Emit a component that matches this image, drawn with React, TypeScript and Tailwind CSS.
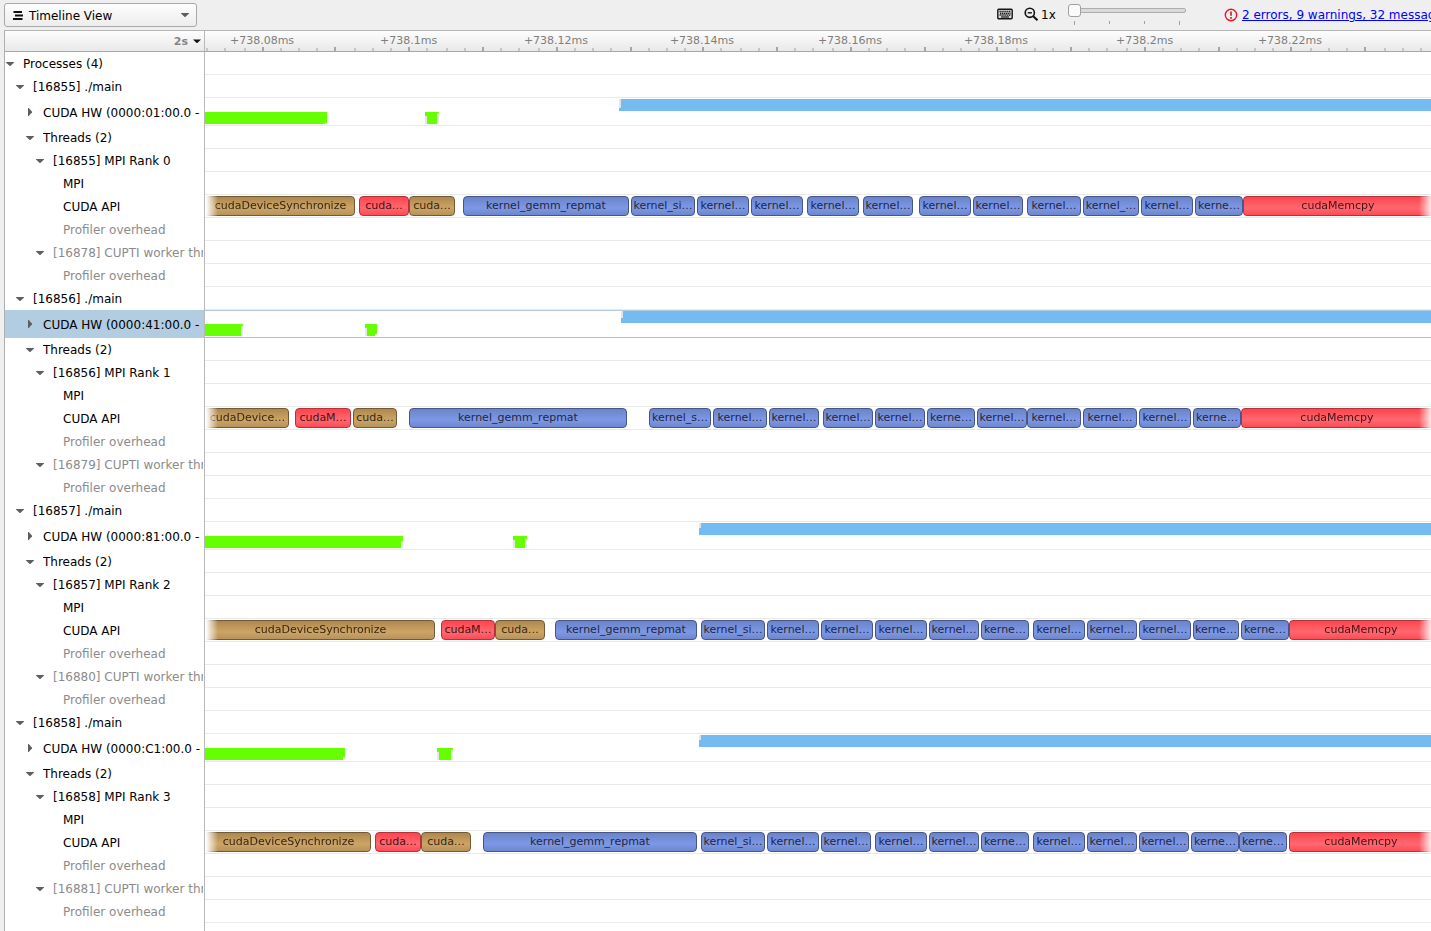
import React from "react";

type Kind = "sync" | "memcpy" | "kernel";
type Block = [start: number, end: number, label: string, kind: Kind];
type Notch = { x: number; y: number; w: number; h: number; c: string };

interface Process {
  pid: string;
  rank: number;
  worker: string;
  bus: string;
  selected?: boolean;
  green: { busyEnd: number; busyNotch: number; start: number; end: number; tailNotch: number; tailSide: "grey" | "white" };
  blueStart: number;
  blueNotch: number;
  blocks: Block[];
}

const ORIGIN = 205;
const RIGHT = 1431;

const short = (k: string, n: number) => `${k.slice(0, n)}…`;
const SYNC = "cudaDeviceSynchronize";
const GEMM = "kernel_gemm_repmat";
const K = "kernel_sigmoid";

const processes: Process[] = [
  {
    pid: "16855",
    rank: 0,
    worker: "16878",
    bus: "01",
    green: { busyEnd: 327, busyNotch: 11, start: 425, end: 439, tailNotch: 1, tailSide: "grey" },
    blueStart: 619,
    blueNotch: 9,
    blocks: [
      [205, 355, SYNC, "sync"],
      [359, 409, "cuda…", "memcpy"],
      [409, 455, "cuda…", "sync"],
      [463, 629, GEMM, "kernel"],
      [631, 695, short(K, 9), "kernel"],
      [697, 749, short(K, 6), "kernel"],
      [751, 803, short(K, 6), "kernel"],
      [807, 859, short(K, 6), "kernel"],
      [863, 913, short(K, 6), "kernel"],
      [919, 971, short(K, 6), "kernel"],
      [973, 1023, short(K, 6), "kernel"],
      [1027, 1081, short(K, 6), "kernel"],
      [1083, 1139, short(K, 7), "kernel"],
      [1141, 1193, short(K, 6), "kernel"],
      [1195, 1243, short(K, 5), "kernel"],
      [1243, 1431, "cudaMemcpy", "memcpy"],
    ],
  },
  {
    pid: "16856",
    rank: 1,
    worker: "16879",
    bus: "41",
    selected: true,
    green: { busyEnd: 243, busyNotch: 2, start: 365, end: 377, tailNotch: 10, tailSide: "white" },
    blueStart: 621,
    blueNotch: 7,
    blocks: [
      [205, 289, "cudaDevice…", "sync"],
      [295, 351, "cudaM…", "memcpy"],
      [353, 397, "cuda…", "sync"],
      [409, 627, GEMM, "kernel"],
      [649, 711, short(K, 8), "kernel"],
      [713, 767, short(K, 6), "kernel"],
      [769, 819, short(K, 6), "kernel"],
      [823, 873, short(K, 6), "kernel"],
      [875, 925, short(K, 6), "kernel"],
      [927, 975, short(K, 5), "kernel"],
      [977, 1027, short(K, 6), "kernel"],
      [1027, 1081, short(K, 6), "kernel"],
      [1083, 1137, short(K, 6), "kernel"],
      [1139, 1191, short(K, 6), "kernel"],
      [1193, 1241, short(K, 5), "kernel"],
      [1241, 1431, "cudaMemcpy", "memcpy"],
    ],
  },
  {
    pid: "16857",
    rank: 2,
    worker: "16880",
    bus: "81",
    green: { busyEnd: 403, busyNotch: 5, start: 513, end: 527, tailNotch: 3, tailSide: "grey" },
    blueStart: 699,
    blueNotch: 5,
    blocks: [
      [205, 435, SYNC, "sync"],
      [441, 495, "cudaM…", "memcpy"],
      [495, 545, "cuda…", "sync"],
      [555, 697, GEMM, "kernel"],
      [701, 765, short(K, 9), "kernel"],
      [767, 819, short(K, 6), "kernel"],
      [821, 873, short(K, 6), "kernel"],
      [875, 927, short(K, 6), "kernel"],
      [929, 979, short(K, 6), "kernel"],
      [981, 1029, short(K, 5), "kernel"],
      [1033, 1085, short(K, 6), "kernel"],
      [1087, 1137, short(K, 6), "kernel"],
      [1139, 1191, short(K, 6), "kernel"],
      [1193, 1239, short(K, 5), "kernel"],
      [1241, 1289, short(K, 5), "kernel"],
      [1289, 1431, "cudaMemcpy", "memcpy"],
    ],
  },
  {
    pid: "16858",
    rank: 3,
    worker: "16881",
    bus: "C1",
    green: { busyEnd: 345, busyNotch: 9, start: 437, end: 453, tailNotch: 2, tailSide: "grey" },
    blueStart: 699,
    blueNotch: 5,
    blocks: [
      [205, 371, SYNC, "sync"],
      [375, 421, "cuda…", "memcpy"],
      [421, 471, "cuda…", "sync"],
      [483, 697, GEMM, "kernel"],
      [701, 765, short(K, 9), "kernel"],
      [767, 819, short(K, 6), "kernel"],
      [821, 871, short(K, 6), "kernel"],
      [875, 927, short(K, 6), "kernel"],
      [929, 979, short(K, 6), "kernel"],
      [981, 1029, short(K, 5), "kernel"],
      [1033, 1085, short(K, 6), "kernel"],
      [1087, 1137, short(K, 6), "kernel"],
      [1139, 1189, short(K, 6), "kernel"],
      [1191, 1239, short(K, 5), "kernel"],
      [1239, 1287, short(K, 5), "kernel"],
      [1289, 1431, "cudaMemcpy", "memcpy"],
    ],
  },
];

const majorTicks = [262, 334, 408, 482, 556, 630, 702, 776, 850, 924, 996, 1070, 1144, 1218, 1290, 1364];
const minorTicks = [
  206, 224, 244, 280, 298, 316, 354, 372, 390, 426, 446, 464, 500, 518, 538, 574, 592, 610, 648, 666, 684, 720, 740,
  758, 794, 812, 832, 868, 886, 904, 942, 960, 978, 1016, 1034, 1052, 1088, 1106, 1126, 1162, 1180, 1198, 1236, 1254,
  1272, 1310, 1328, 1346, 1384, 1402, 1420,
];
const timeLabels: [number, string][] = [
  [262, "+738.08ms"],
  [408.6, "+738.1ms"],
  [556, "+738.12ms"],
  [702, "+738.14ms"],
  [850, "+738.16ms"],
  [996, "+738.18ms"],
  [1144.6, "+738.2ms"],
  [1290, "+738.22ms"],
];

const blockStyles: Record<Kind, string> = {
  sync: "border-[#725a35] bg-linear-to-b from-[#ad884f] via-[#cda464] via-60% to-[#b8935a] text-[#352817]",
  memcpy: "border-[#b5323b] bg-linear-to-b from-[#ff434d] via-[#ff6870] via-60% to-[#ff4a54] text-[#421416]",
  kernel: "border-[#46558a] bg-linear-to-b from-[#6b83c6] via-[#7d98e8] via-60% to-[#6d86cd] text-[#1f2740]",
};

function Arrow({ open }: { open: boolean }) {
  return (
    <svg width="10" height="10" viewBox="0 0 10 10" className="shrink-0">
      {open ? <path d="M1 3h8v.6L5.300 7h-.6L1 3.600z" fill="#5e5e5e" /> : <path d="M3 1h.8L7 4.700v.6L3.800 9H3z" fill="#5e5e5e" />}
    </svg>
  );
}

const indents = ["pl-0", "pl-[10px]", "pl-[20px]", "pl-[30px]", "pl-[40px]"];

interface RowProps {
  depth: number;
  label: string;
  arrow?: "open" | "closed";
  muted?: boolean;
  tall?: boolean;
  selected?: boolean;
  children?: React.ReactNode;
}

function Row({ depth, label, arrow, muted, tall, selected, children }: RowProps) {
  return (
    <div className={`flex shrink-0 ${tall ? "h-[28px]" : "h-[23px]"}`}>
      <div
        className={`flex w-[200px] shrink-0 items-center overflow-hidden border-r border-[#b8b8b8] pr-px ${indents[depth]} ${
          selected ? "bg-[#b2cce1]" : "bg-white"
        }`}
      >
        <div className="flex w-[18px] shrink-0 items-center">{arrow && <Arrow open={arrow === "open"} />}</div>
        <span
          className={`text-[12px] leading-[22px] whitespace-nowrap ${tall ? "pt-[2px]" : "overflow-hidden"} ${
            muted ? "text-[#8b8b8b]" : "text-black"
          }`}
        >
          {label}
        </span>
      </div>
      <div
        className={`flex min-w-0 flex-1 overflow-hidden border-b ${
          selected ? "border-t border-t-[#b2cce1] border-b-[#aabfd2]" : "border-[#e9e9e9]"
        }`}
      >
        {children}
      </div>
    </div>
  );
}

function HardwareBars({ p }: { p: Process }) {
  const g = p.green;
  const top = p.selected ? -1 : 0;
  const notches: Notch[] = [
    { x: g.busyEnd - 2, y: 14 + g.busyNotch, w: 2, h: 12 - g.busyNotch, c: g.busyNotch > 8 ? "#f4f4f4" : "#e6e6e6" },
    { x: g.start, y: 18, w: 2, h: 8, c: "#e6e6e6" },
    { x: g.end - 2, y: 14 + g.tailNotch, w: 2, h: 12 - g.tailNotch, c: g.tailSide === "grey" ? "#e6e6e6" : "#f4f4f4" },
    { x: p.blueStart, y: 1, w: 2, h: p.blueNotch, c: "#e4e4e4" },
  ];
  return (
    <svg width={RIGHT - ORIGIN} height="27" viewBox={`${ORIGIN} ${-top} ${RIGHT - ORIGIN} 27`} className="shrink-0" shapeRendering="crispEdges">
      <rect x={ORIGIN} y="14" width={g.busyEnd - ORIGIN} height="12" fill="#66ff00" />
      <rect x={g.start} y="14" width={g.end - g.start} height="12" fill="#66ff00" />
      <rect x={p.blueStart} y="1" width={RIGHT - p.blueStart} height="12" fill="#74bbf2" />
      {notches.map((n, i) => (
        <rect key={i} x={n.x} y={n.y} width={n.w} height={n.h} fill={n.c} />
      ))}
    </svg>
  );
}

function ApiBlocks({ blocks }: { blocks: Block[] }) {
  return (
    <div className="flex pt-px">
      {blocks.map(([start, end, label, kind], i) => {
        const first = i === 0;
        const last = i === blocks.length - 1;
        const gap = first ? 0 : start - blocks[i - 1][1];
        const edge = first
          ? "rounded-r-[4px] border-l-0 pl-[2px] mask-[linear-gradient(to_right,transparent_1px,black_13px)]"
          : last
            ? "rounded-l-[4px] border-r-0 pl-px mask-[linear-gradient(to_left,transparent_-2px,black_12px)]"
            : "rounded-[4px]";
        return (
          <div
            key={start}
            className={`flex h-[20px] shrink-0 items-center justify-center overflow-hidden border text-[11px] leading-[18px] whitespace-nowrap ${edge} ${blockStyles[kind]}`}
            style={{ width: end - start, marginLeft: gap }}
          >
            {label}
          </div>
        );
      })}
    </div>
  );
}

function ProcessRows({ p }: { p: Process }) {
  return (
    <>
      <Row depth={1} arrow="open" label={`[${p.pid}] ./main`} />
      <Row depth={2} arrow="closed" label={`CUDA HW (0000:${p.bus}:00.0 -`} tall selected={p.selected}>
        <HardwareBars p={p} />
      </Row>
      <Row depth={2} arrow="open" label="Threads (2)" />
      <Row depth={3} arrow="open" label={`[${p.pid}] MPI Rank ${p.rank}`} />
      <Row depth={4} label="MPI" />
      <Row depth={4} label="CUDA API">
        <ApiBlocks blocks={p.blocks} />
      </Row>
      <Row depth={4} label="Profiler overhead" muted />
      <Row depth={3} arrow="open" label={`[${p.worker}] CUPTI worker thread`} muted />
      <Row depth={4} label="Profiler overhead" muted />
    </>
  );
}

function Toolbar() {
  return (
    <div className="flex h-[30px] shrink-0 items-start">
      <button className="mt-[3px] ml-1 flex h-[24px] w-[193px] shrink-0 items-center rounded-[3px] border border-[#a9a9a9] bg-linear-to-b from-[#fdfdfd] to-[#ededed] pr-[6px] pl-[8px]">
        <svg width="11" height="11" viewBox="0 0 11 11" className="shrink-0">
          <path d="M.5 2h8.500M2 5.500h8M0 9h9.500" stroke="#111" strokeWidth="2.200" />
        </svg>
        <span className="ml-[5px] flex-1 pt-px text-left text-[12px] leading-[20px]">Timeline View</span>
        <Arrow open />
      </button>
      <svg width="16" height="12" viewBox="0 0 16 12" className="mt-[8px] ml-[800px] shrink-0">
        <rect x=".8" y="1.300" width="14.400" height="9.400" rx="1" fill="#ddd" stroke="#151515" strokeWidth="1.400" />
        <path d="M2.500 3.500h11M3 5.500h10.500M2.500 7.200h11" stroke="#151515" strokeWidth="1.300" strokeDasharray="1.300 .6" />
        <path d="M4 9h8" stroke="#151515" strokeWidth="1.200" />
      </svg>
      <svg width="15" height="15" viewBox="0 0 15 15" fill="none" stroke="#111" className="mt-[7px] ml-[11px] shrink-0">
        <circle cx="5.800" cy="5.800" r="4.600" strokeWidth="1.600" />
        <path d="M9.200 9.200L13.500 13.200" strokeWidth="2.100" />
        <path d="M3.700 5.800h4.200" strokeWidth="1.400" />
      </svg>
      <span className="mt-[5px] ml-[2px] w-[16px] shrink-0 text-[12px] leading-[20px]">1x</span>
      <svg width="122" height="24" viewBox="0 0 122 24" className="mt-[3px] ml-[10px] shrink-0">
        <rect x="3.500" y="5.500" width="115" height="4" rx="1.500" fill="#dadada" stroke="#adadad" />
        <path d="M7.500 18v4M42.500 18v3M77.500 18v3M112.500 18v4" stroke="#a0a0a0" />
        <rect x="1.500" y="1.500" width="12" height="12" rx="2.500" fill="#fafafa" stroke="#a0a0a0" />
      </svg>
      <svg width="14" height="14" viewBox="0 0 14 14" fill="none" stroke="#e01b24" className="mt-[8px] ml-[35px] shrink-0">
        <circle cx="7" cy="7" r="5.700" strokeWidth="1.400" />
        <path d="M7 3.500v4.300M7 9v1.700" strokeWidth="1.700" />
      </svg>
      <a className="mt-[5px] ml-[4px] shrink-0 text-[12px] leading-[20px] whitespace-nowrap text-[#0000ff] underline">2 errors, 9 warnings, 32 messages</a>
    </div>
  );
}

function Ruler() {
  return (
    <div className="flex h-[22px] shrink-0 border-y border-t-[#b5b5b5] border-b-[#a8a8a8] bg-linear-to-b from-[#fdfdfd] to-[#e9e9e9]">
      <div className="flex w-[200px] shrink-0 items-center justify-end border-r border-[#b8b8b8] pr-[2px] text-[11px] font-bold text-[#858585]">
        <span className="pt-[3px]">2s</span>
        <svg width="10" height="10" viewBox="0 0 10 10" className="ml-[4px]">
          <path d="M1 3.500h8L5.300 7h-.6z" fill="#111" />
        </svg>
      </div>
      <div className="flex min-w-0 flex-1 flex-col overflow-hidden">
        <div className="flex h-[16px] shrink-0 text-[11px] leading-[20px] text-[#7e7e7e]">
          {timeLabels.map(([x, label], i) => (
            <span
              key={label}
              className="w-[80px] shrink-0 text-center"
              style={{ marginLeft: i === 0 ? x - 40 - ORIGIN : x - timeLabels[i - 1][0] - 80 }}
            >
              {label}
            </span>
          ))}
        </div>
        <svg width={RIGHT - ORIGIN} height="4" viewBox={`${ORIGIN} 0 ${RIGHT - ORIGIN} 4`} className="shrink-0" shapeRendering="crispEdges">
          {majorTicks.map((x) => (
            <rect key={x} x={x} y="0" width="2" height="4" fill="#a6a6a6" />
          ))}
          {minorTicks.map((x) => (
            <rect key={x} x={x} y="1" width="2" height="3" fill="#c6c6c6" />
          ))}
        </svg>
      </div>
    </div>
  );
}

export default function App() {
  return (
    <div className="flex h-[931px] w-[1431px] flex-col overflow-hidden bg-[#efefef] font-['DejaVu_Sans',sans-serif] text-black">
      <Toolbar />
      <div className="ml-1 flex min-h-0 flex-1 flex-col overflow-hidden border-l border-[#b0b0b0] bg-white">
        <Ruler />
        <Row depth={0} arrow="open" label="Processes (4)" />
        {processes.map((p) => (
          <ProcessRows key={p.pid} p={p} />
        ))}
        <div className="flex flex-1">
          <div className="w-[200px] border-r border-[#b8b8b8]" />
        </div>
      </div>
    </div>
  );
}
